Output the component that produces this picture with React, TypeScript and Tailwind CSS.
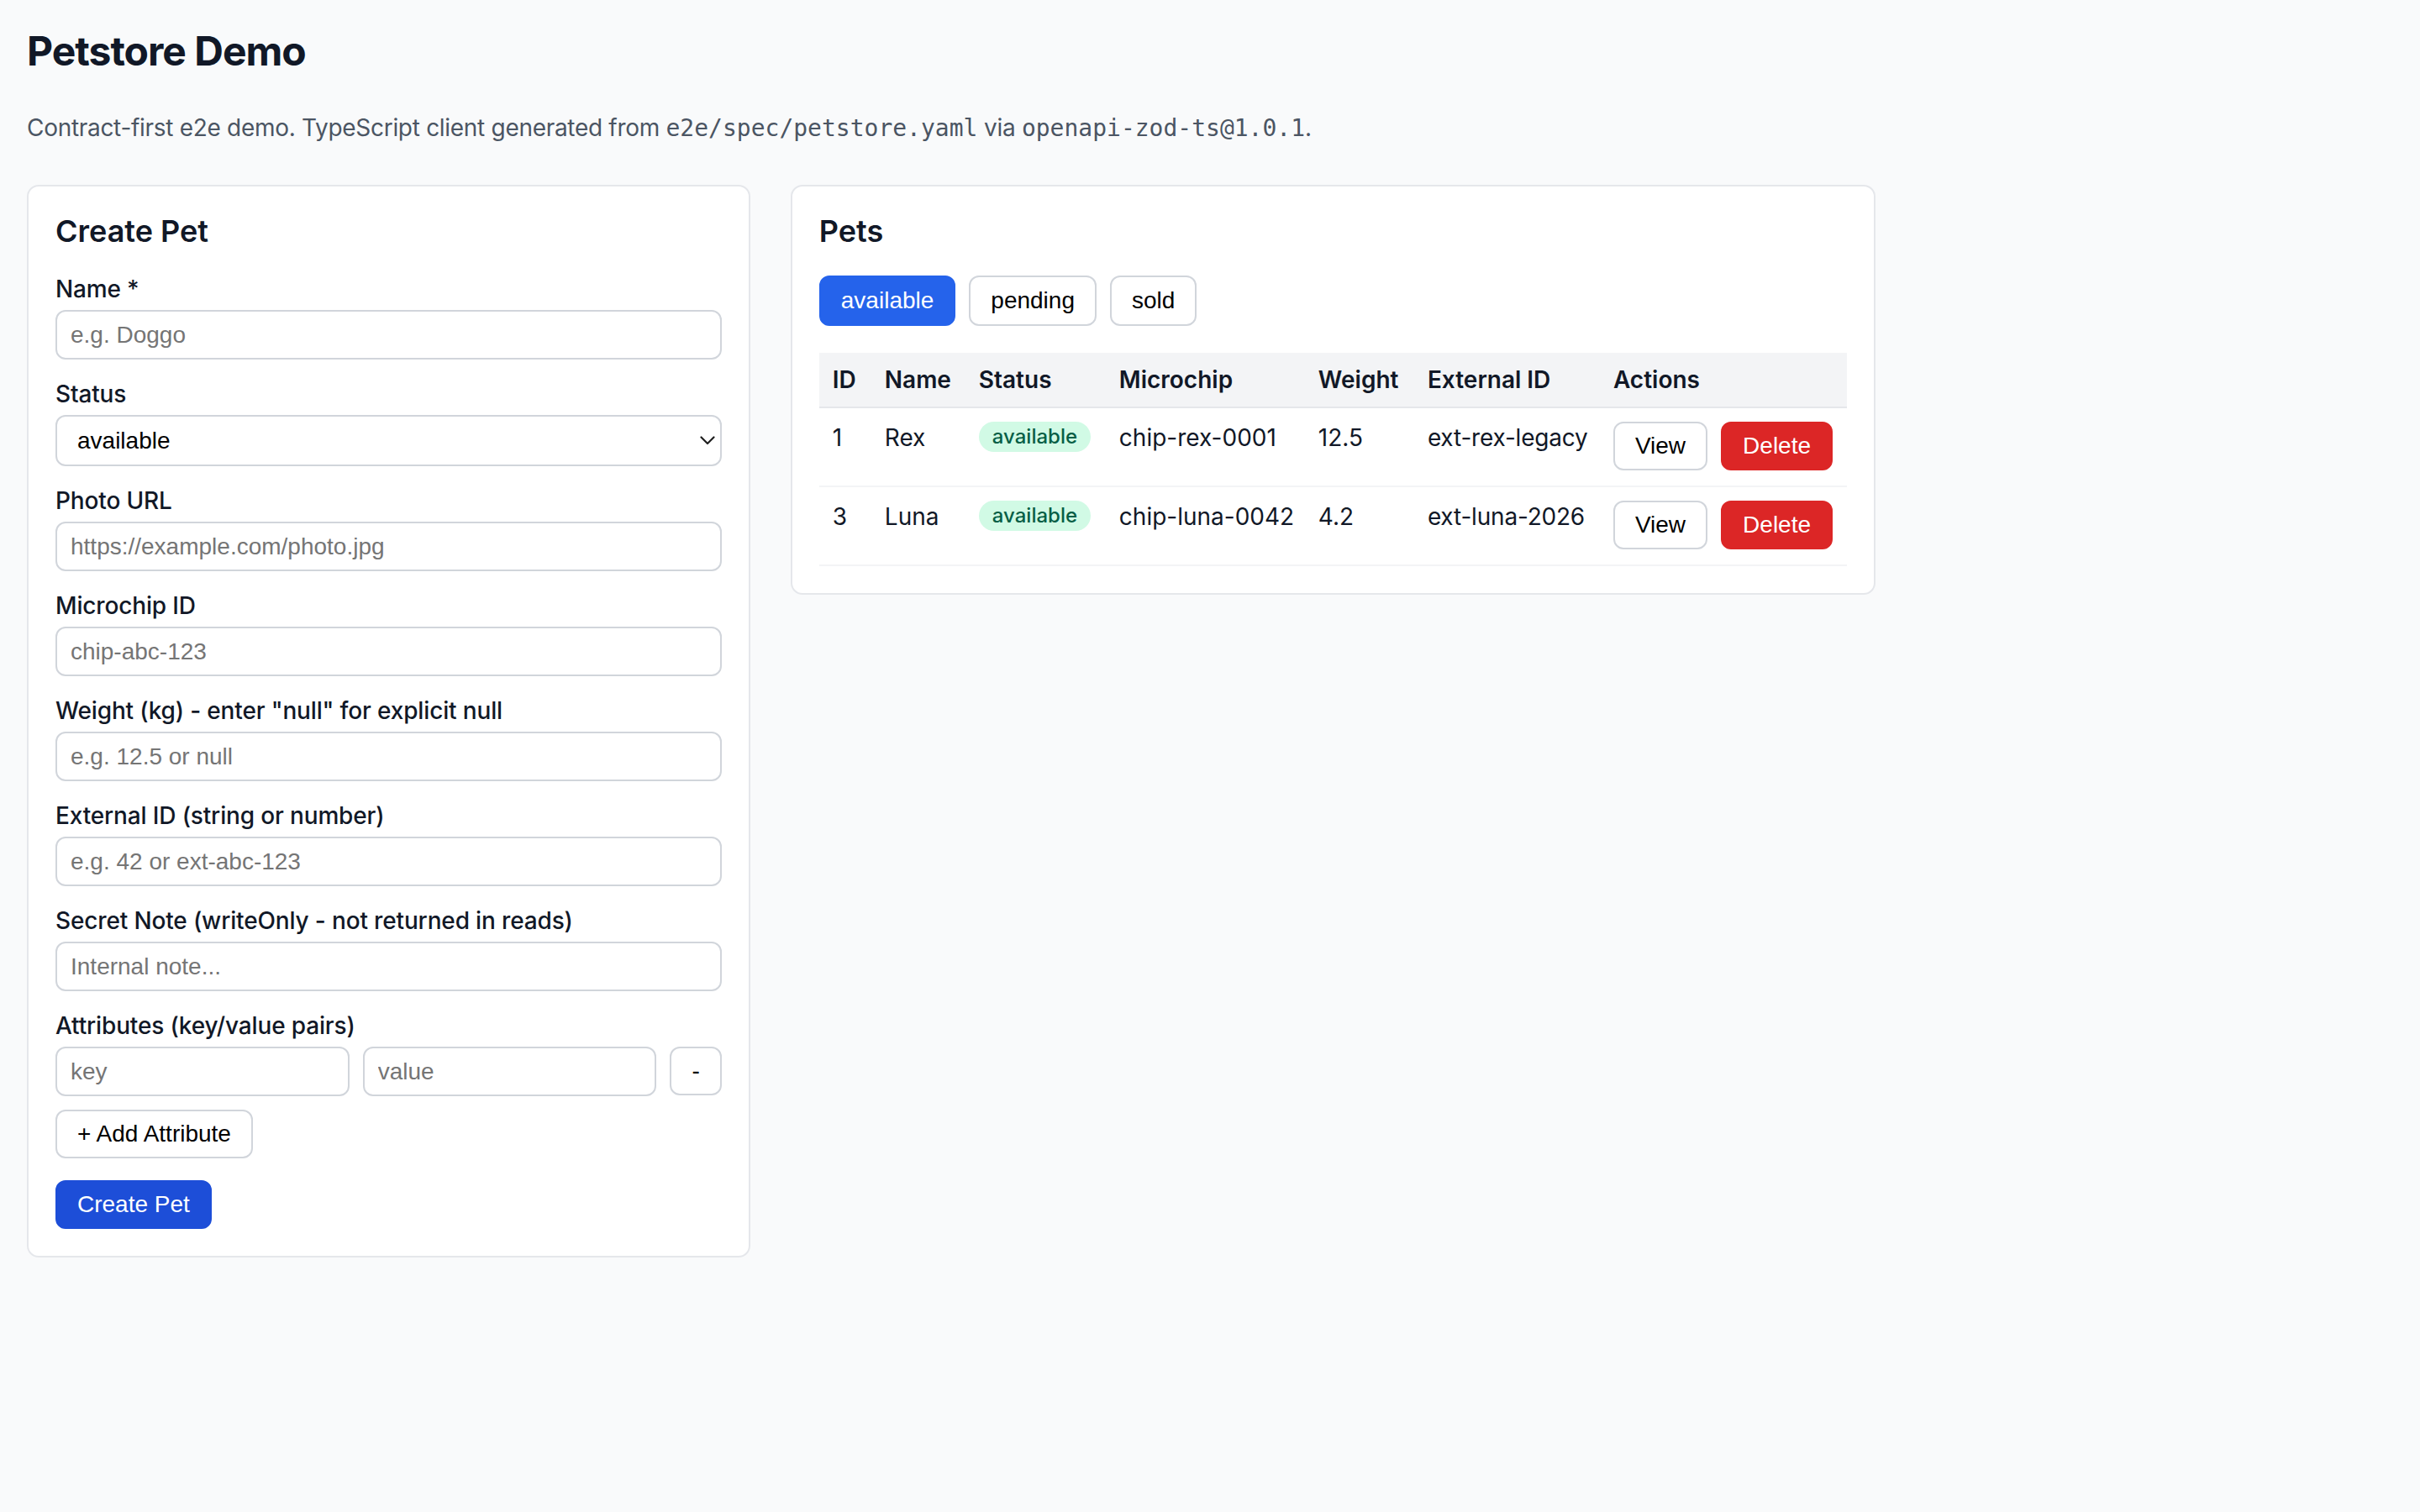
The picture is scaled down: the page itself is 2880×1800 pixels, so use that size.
import React from "react";

const inputCls =
  "block w-full h-[59px] rounded-[12px] border-2 border-[#d1d5db] bg-white px-[16px] text-[28px] leading-[31px] text-black font-['Liberation_Sans',Arial,sans-serif] placeholder:text-[#757575] outline-none";

const btnCls =
  "h-[58px] rounded-[12px] border-2 px-[24px] text-[28px] leading-[30px] font-['Liberation_Sans',Arial,sans-serif] whitespace-nowrap";

function Field({ label, children }: { label: string; children: React.ReactNode }) {
  return (
    <div>
      <label className="block text-[28px] leading-[34px] font-medium tracking-[-0.15px] text-[#111827]">{label}</label>
      <div className="mt-[8px]">{children}</div>
    </div>
  );
}

const pets = [
  { id: 1, name: "Rex", chip: "chip-rex-0001", weight: "12.5", ext: "ext-rex-legacy" },
  { id: 3, name: "Luna", chip: "chip-luna-0042", weight: "4.2", ext: "ext-luna-2026" },
];

export default function App() {
  return (
    <div className="min-h-screen bg-[#f9fafb] px-[32px] pt-[32px] font-['Inter',sans-serif] text-[#111827]">
      <h1 className="text-[48px] leading-[58px] font-bold tracking-[-1px]">Petstore Demo</h1>
      <p className="mt-[45px] text-[28px] leading-[34px] text-[#4b5563]">
        <span className="tracking-[-0.3px]">Contract-first e2e demo. TypeScript client generated from </span>
        <code className="font-['DejaVu_Sans_Mono',monospace]">e2e/spec/petstore.yaml</code>
        <span className="tracking-[-0.3px]"> via </span>
        <code className="font-['DejaVu_Sans_Mono',monospace]">openapi-zod-ts@1.0.1</code>.
      </p>

      <div className="mt-[50px] grid max-w-[2200px] grid-cols-[2fr_3fr] items-start gap-[48px]">
        {/* Create Pet card */}
        <div className="rounded-[14px] border-2 border-[#e5e7eb] bg-white p-[32px]">
          <h2 className="text-[36px] leading-[43px] font-semibold">Create Pet</h2>
          <div className="mt-[30px] flex flex-col gap-[24px]">
            <Field label="Name *">
              <input className={inputCls} placeholder="e.g. Doggo" />
            </Field>
            <Field label="Status">
              <div className="relative">
                <select
                  className="block w-full h-[61px] appearance-none rounded-[12px] border-2 border-[#d1d5db] bg-white pl-[24px] pr-[40px] text-[28px] text-black font-['Liberation_Sans',Arial,sans-serif] outline-none"
                  defaultValue="available"
                >
                  <option value="available">available</option>
                  <option value="pending">pending</option>
                  <option value="sold">sold</option>
                </select>
                <svg
                  className="pointer-events-none absolute right-[8px] top-[25px]"
                  width="18"
                  height="11"
                  viewBox="0 0 18 11"
                  fill="none"
                >
                  <path d="M1.5 1.5 L9 9 L16.5 1.5" stroke="#1f1f1f" strokeWidth="2.2" strokeLinecap="round" strokeLinejoin="round" />
                </svg>
              </div>
            </Field>
            <Field label="Photo URL">
              <input className={inputCls} placeholder="https://example.com/photo.jpg" />
            </Field>
            <Field label="Microchip ID">
              <input className={inputCls} placeholder="chip-abc-123" />
            </Field>
            <Field label={'Weight (kg) - enter "null" for explicit null'}>
              <input className={inputCls} placeholder="e.g. 12.5 or null" />
            </Field>
            <Field label="External ID (string or number)">
              <input className={inputCls} placeholder="e.g. 42 or ext-abc-123" />
            </Field>
            <Field label="Secret Note (writeOnly - not returned in reads)">
              <input className={inputCls} placeholder="Internal note..." />
            </Field>
            <Field label="Attributes (key/value pairs)">
              <div className="flex gap-[16px]">
                <input className={inputCls + " flex-1 min-w-0"} placeholder="key" />
                <input className={inputCls + " flex-1 min-w-0"} placeholder="value" />
                <button className={btnCls + " border-[#d1d5db] bg-white text-black"}>-</button>
              </div>
            </Field>
          </div>
          <div className="mt-[16px]">
            <button className={btnCls + " border-[#d1d5db] bg-white text-black"}>+ Add Attribute</button>
          </div>
          <div className="mt-[26px]">
            <button className={btnCls + " border-[#1d4ed8] bg-[#1d4ed8] text-white"}>Create Pet</button>
          </div>
        </div>

        {/* Pets card */}
        <div className="rounded-[14px] border-2 border-[#e5e7eb] bg-white p-[32px]">
          <h2 className="text-[36px] leading-[43px] font-semibold">Pets</h2>
          <div className="mt-[31px] flex gap-[16px]">
            <button className="h-[60px] rounded-[12px] border-2 border-[#2563eb] bg-[#2563eb] px-[24px] text-[28px] leading-[32px] text-white font-['Liberation_Sans',Arial,sans-serif]">
              available
            </button>
            <button className="h-[60px] rounded-[12px] border-2 border-[#d1d5db] bg-white px-[24px] text-[28px] leading-[32px] text-black font-['Liberation_Sans',Arial,sans-serif]">
              pending
            </button>
            <button className="h-[60px] rounded-[12px] border-2 border-[#d1d5db] bg-white px-[24px] text-[28px] leading-[32px] text-black font-['Liberation_Sans',Arial,sans-serif]">
              sold
            </button>
          </div>
          <table className="mt-[32px] w-full table-fixed border-collapse text-[28px]">
            <colgroup>
              <col className="w-[62px]" />
              <col className="w-[112px]" />
              <col className="w-[167px]" />
              <col className="w-[237px]" />
              <col className="w-[130px]" />
              <col className="w-[221px]" />
              <col className="w-[294px]" />
            </colgroup>
            <thead>
              <tr className="border-b-2 border-[#e5e7eb] bg-[#f3f4f6]">
                {["ID", "Name", "Status", "Microchip", "Weight", "External ID", "Actions"].map((h) => (
                  <th key={h} className="px-[16px] py-[16px] text-left leading-[32px] font-semibold whitespace-nowrap">
                    {h}
                  </th>
                ))}
              </tr>
            </thead>
            <tbody>
              {pets.map((p) => (
                <tr key={p.id} className="border-b-2 border-[#f3f4f6]">
                  <td className="px-[16px] py-[16px] align-top leading-[38px] whitespace-nowrap">{p.id}</td>
                  <td className="px-[16px] py-[16px] align-top leading-[38px] whitespace-nowrap">{p.name}</td>
                  <td className="px-[16px] py-[16px] align-top leading-[38px] whitespace-nowrap">
                    <span className="inline-flex h-[36px] items-center rounded-full bg-[#d1fae5] px-[16px] align-top text-[24px] font-medium text-[#065f46]">
                      available
                    </span>
                  </td>
                  <td className="px-[16px] py-[16px] align-top leading-[38px] whitespace-nowrap">{p.chip}</td>
                  <td className="px-[16px] py-[16px] align-top leading-[38px] whitespace-nowrap">{p.weight}</td>
                  <td className="px-[16px] py-[16px] align-top leading-[38px] whitespace-nowrap tracking-[-0.2px]">{p.ext}</td>
                  <td className="px-[16px] py-[16px] align-top">
                    <div className="flex h-[60px] items-start gap-[16px]">
                      <button className={btnCls + " border-[#d1d5db] bg-white text-black"}>View</button>
                      <button className={btnCls + " border-[#dc2626] bg-[#dc2626] text-white"}>Delete</button>
                    </div>
                  </td>
                </tr>
              ))}
            </tbody>
          </table>
        </div>
      </div>
    </div>
  );
}
